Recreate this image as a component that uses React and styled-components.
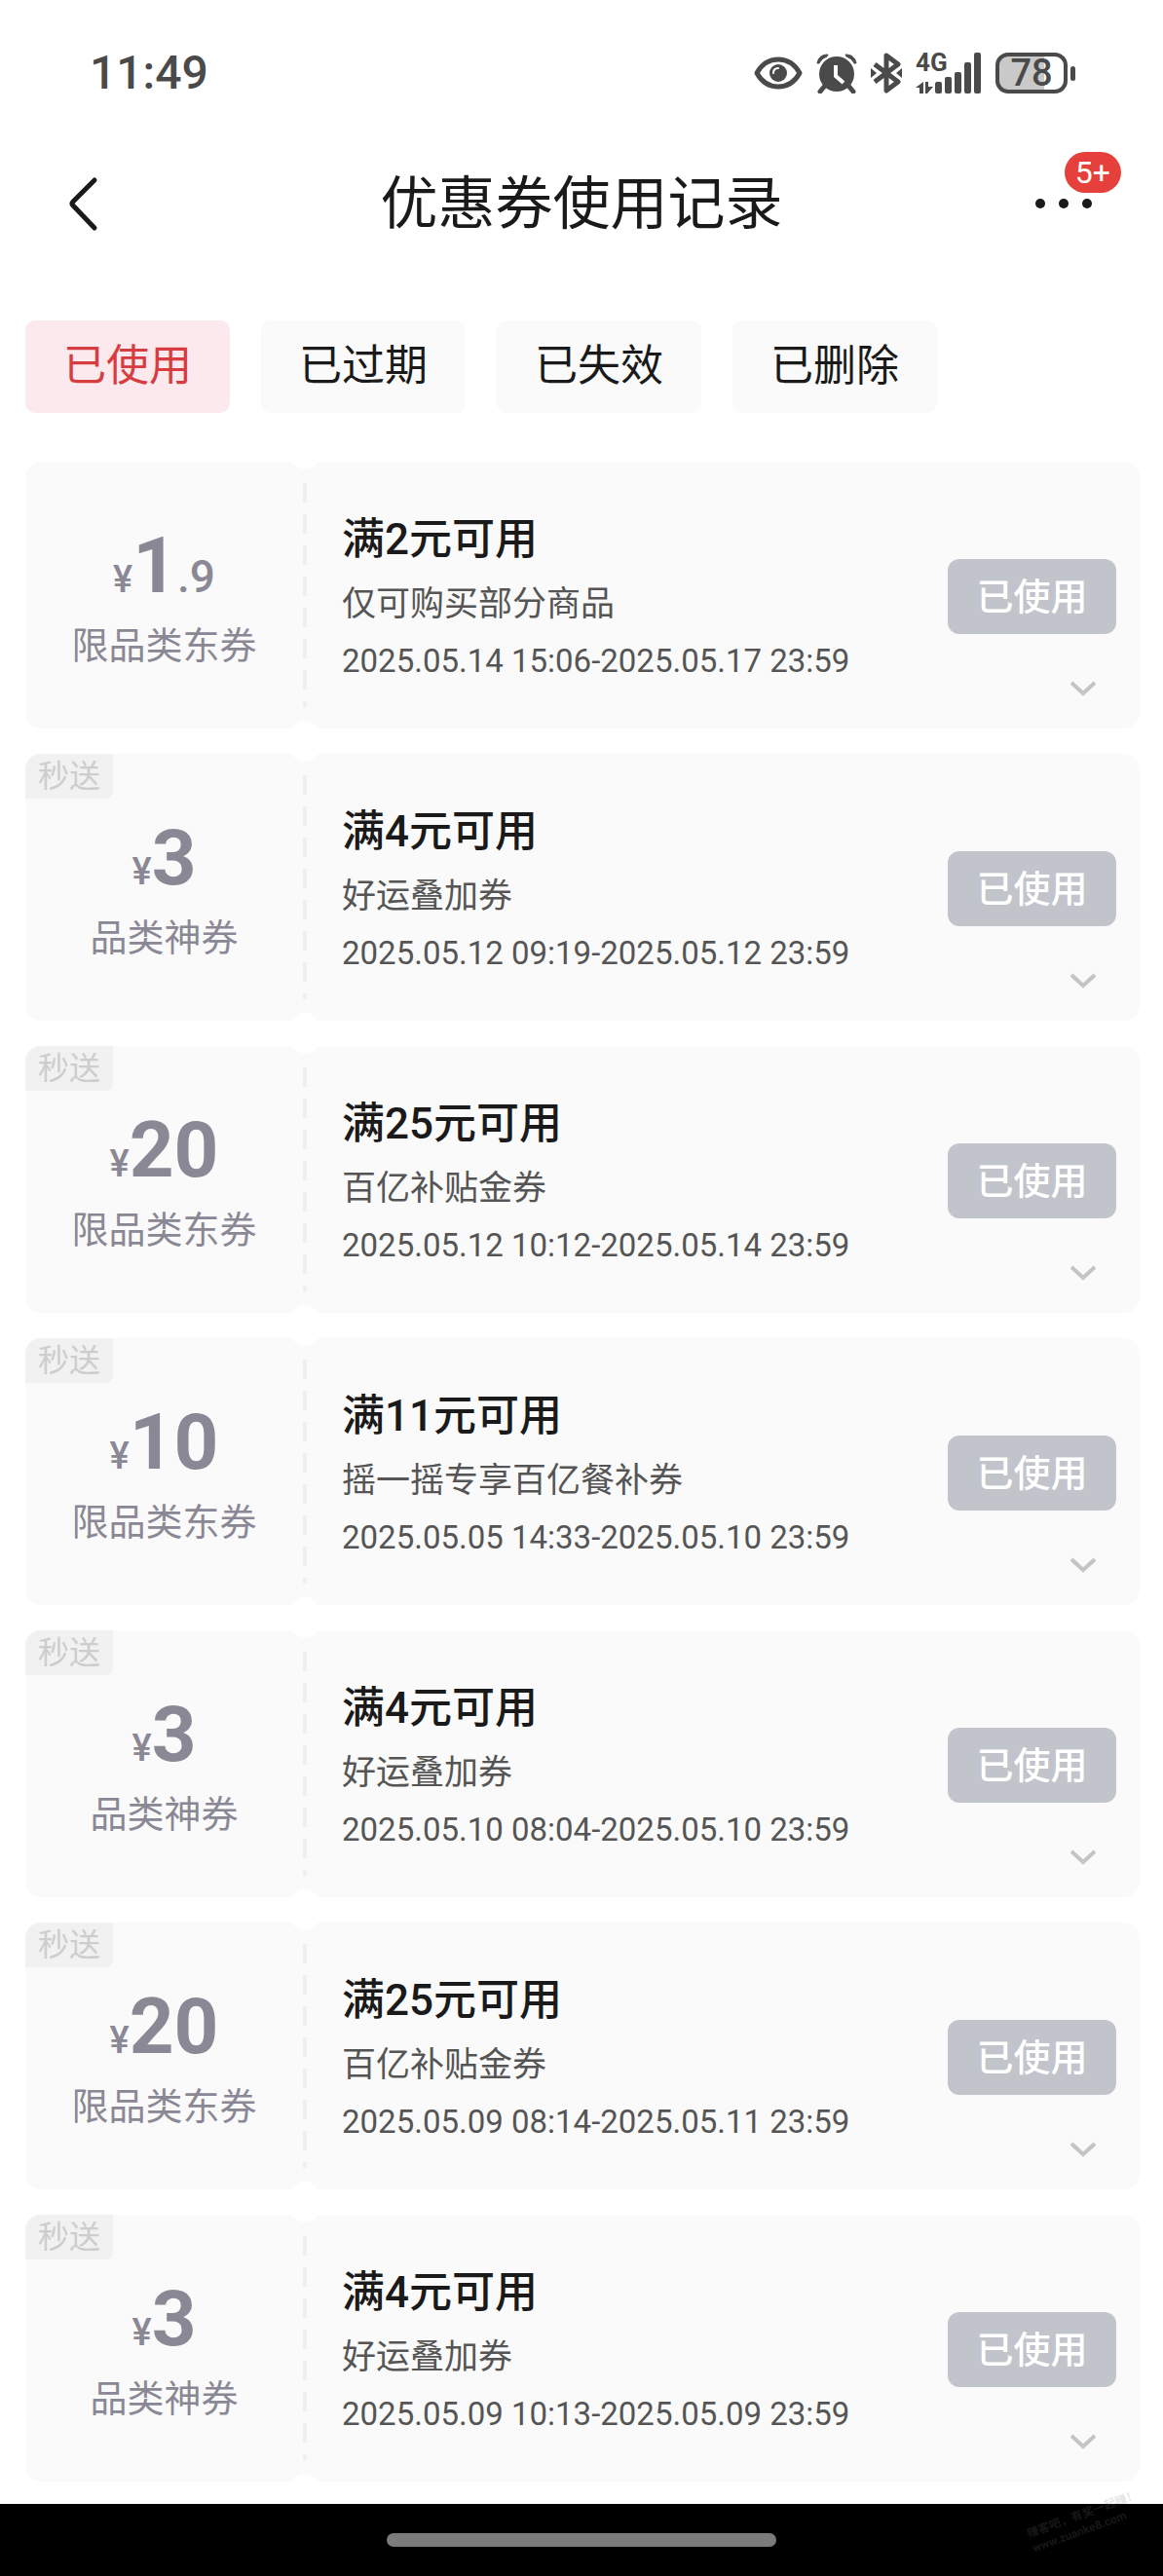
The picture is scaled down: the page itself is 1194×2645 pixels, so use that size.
import React, { useState } from "react";
import styled, { createGlobalStyle } from "styled-components";

const GlobalStyle = createGlobalStyle`
  * {
    box-sizing: border-box;
  }
  body {
    margin: 0;
    background: #fff;
    color: #1a1a1a;
    font-family: Roboto, "Noto Sans CJK SC", sans-serif;
  }
  button {
    padding: 0;
    border: 0;
    background: none;
    font-family: inherit;
    cursor: pointer;
  }
`;

const Page = styled.div`
  display: flex;
  flex-direction: column;
  min-height: 100vh;
`;

const StatusBar = styled.div`
  display: flex;
  align-items: center;
  justify-content: space-between;
  height: 150px;
  padding: 0 90px 0 92px;
  color: #4a4a4a;
`;

const Clock = styled.time`
  font-size: 48px;
  line-height: 56px;
  font-weight: 500;
`;

const StatusIcons = styled.div`
  display: flex;
  align-items: center;
  gap: 14px;
`;

const Network = styled.div`
  position: relative;
  display: flex;
  span {
    position: absolute;
    top: 0;
    left: 0;
    font-size: 26px;
    line-height: 20px;
    font-weight: 700;
  }
`;

const Battery = styled.div`
  display: flex;
  align-items: center;
  gap: 3px;
  &::after {
    width: 5px;
    height: 15px;
    border-radius: 3px;
    background: #4a4a4a;
    content: "";
  }
`;

const BatteryLevel = styled.span`
  width: 74px;
  height: 42px;
  border: 4px solid #4a4a4a;
  border-radius: 13px;
  background: linear-gradient(to right, #c9c9c9 ${({ $level }) => $level}%, #fff 0);
  font-size: 38px;
  line-height: 35px;
  font-weight: 500;
  text-align: center;
`;

const Header = styled.header`
  display: flex;
  align-items: center;
  justify-content: space-between;
  height: 120px;
  padding: 0 64px;
`;

const HeaderTitle = styled.h1`
  margin: 0;
  font-size: 59px;
  line-height: 80px;
  font-weight: 400;
`;

const IconButton = styled.button`
  position: relative;
  display: flex;
  align-items: center;
  justify-content: ${({ $end }) => ($end ? "flex-end" : "flex-start")};
  width: 80px;
  height: 80px;
`;

const Badge = styled.span`
  position: absolute;
  top: -14px;
  right: -21px;
  padding: 0 11px;
  border-radius: 21px;
  background: #e5403b;
  color: #fff;
  font-size: 32px;
  line-height: 42px;
`;

const Tabs = styled.nav`
  display: flex;
  gap: 32px;
  padding: 59px 26px 50px;
`;

const Tab = styled.button`
  width: 210px;
  height: 95px;
  padding-bottom: 2px;
  border-radius: 10px;
  background: ${({ $active }) => ($active ? "#fbe9ee" : "#fafafa")};
  color: ${({ $active }) => ($active ? "#d63c40" : "#1a1a1a")};
  font-size: 44px;
  line-height: 64px;
`;

const CouponList = styled.ul`
  display: flex;
  flex-direction: column;
  gap: 26px;
  flex: 1;
  margin: 0;
  padding: 0 24px 22px 26px;
  list-style: none;
`;

const Coupon = styled.li`
  position: relative;
  display: flex;
  min-height: 274px;
  border-radius: 16px;
  background: #fafafa;
`;

const CouponValue = styled.div`
  display: flex;
  flex-direction: column;
  align-items: center;
  width: 285px;
  padding: 63px 0 0;
  color: #8b8895;
`;

const Amount = styled.div`
  display: flex;
  align-items: baseline;
  font-size: 38px;
  line-height: 88px;
  font-weight: 500;
  strong {
    font-size: 80px;
    font-weight: 700;
  }
  small {
    font-size: 46px;
  }
`;

const Kind = styled.div`
  font-size: 38px;
  line-height: 48px;
`;

const Tag = styled.span`
  position: absolute;
  top: 0;
  left: 0;
  padding: 0 13px;
  border-radius: 16px 4px 6px 0;
  background: #f1f1f1;
  color: #cdcdcd;
  font-size: 32px;
  line-height: 46px;
`;

/* dashed tear line with a punched hole at each end */
const Tear = styled.div`
  position: relative;
  width: 4px;
  margin: 22px 0;
  background: repeating-linear-gradient(#efefef 0 20px, transparent 20px 32px);
  &::before,
  &::after {
    position: absolute;
    left: -13px;
    width: 30px;
    height: 30px;
    border-radius: 50%;
    background: #fff;
    content: "";
  }
  &::before {
    top: -44px;
  }
  &::after {
    bottom: -44px;
  }
`;

const CouponInfo = styled.div`
  flex: 1;
  min-width: 0;
  padding: 48px 0 0 36px;
`;

const CouponTitle = styled.h2`
  margin: 0;
  font-size: 44px;
  line-height: 64px;
  font-weight: 500;
`;

const CouponText = styled.p`
  margin: 0;
  color: #555;
  font-size: ${({ $date }) => ($date ? 33 : 35)}px;
  line-height: ${({ $date }) => ($date ? 46 : 70)}px;
`;

const CouponActions = styled.div`
  display: flex;
  flex-direction: column;
  align-items: flex-end;
  padding: 100px 24px 0 0;
`;

const StateButton = styled.button`
  width: 173px;
  height: 77px;
  border-radius: 12px;
  background: #c2c4cc;
  color: #fff;
  font-size: 38px;
  line-height: 56px;
  font-weight: 500;
`;

const ExpandButton = styled.button`
  display: flex;
  align-items: center;
  justify-content: center;
  width: 68px;
  height: 60px;
  margin-top: 26px;
`;

const HomeBar = styled.footer`
  position: relative;
  display: flex;
  align-items: center;
  justify-content: center;
  height: 74px;
  background: #000;
  &::before {
    width: 400px;
    height: 14px;
    border-radius: 7px;
    background: #7b7b7b;
    content: "";
  }
`;

const Watermark = styled.div`
  position: absolute;
  right: 20px;
  bottom: 40px;
  color: rgba(120, 120, 120, 0.2);
  font-size: 12px;
  line-height: 16px;
  font-weight: 700;
  transform: rotate(-20deg);
`;

const EyeIcon = () => (
  <svg width="50" height="34" viewBox="0 0 50 34" fill="none">
    <path d="M3 17C8 8 16 3 25 3s17 5 22 14c-5 9-13 14-22 14S8 26 3 17Z" stroke="#4a4a4a" strokeWidth="5" strokeLinejoin="round" />
    <circle cx="25" cy="17" r="9" fill="#4a4a4a" />
    <path d="M20 17c0-3 2-5 5-5" stroke="#fff" strokeWidth="2" strokeLinecap="round" />
  </svg>
);

const AlarmIcon = () => (
  <svg width="42" height="42" viewBox="0 0 42 42" fill="none" stroke="#4a4a4a">
    <path d="M9 34l-5 6M33 34l5 6" strokeWidth="5" strokeLinecap="round" />
    <circle cx="21" cy="22" r="18" fill="#4a4a4a" stroke="none" />
    <path d="M1 11C2 5 6 2 12 2L11 4Q5 6 3 11ZM41 11C40 5 36 2 30 2l1 2q6 2 8 7Z" fill="#4a4a4a" strokeWidth="1" strokeLinejoin="round" />
    <path d="M20 13v11l8 7" stroke="#fff" strokeWidth="4" />
  </svg>
);

const BluetoothIcon = () => (
  <svg width="32" height="42" viewBox="0 0 32 42" fill="none">
    <path d="M4 12l24 18-12 9V3l12 9L4 30" stroke="#4a4a4a" strokeWidth="5" strokeLinejoin="round" />
    <path d="M0 16l6 5-6 5zM32 16l-6 5 6 5z" fill="#4a4a4a" />
  </svg>
);

const SignalIcon = () => (
  <svg width="68" height="42" viewBox="0 0 68 42" fill="#4a4a4a">
    <path d="M8 30v12H4v-6H0zM10 30h3v5h5l-6 7h-2z" />
    <rect x="20" y="30" width="7" height="12" rx="2" />
    <rect x="30" y="25" width="7" height="17" rx="2" />
    <rect x="40" y="20" width="7" height="22" rx="2" />
    <rect x="50" y="10" width="7" height="32" rx="2" />
    <rect x="60" y="0" width="7" height="42" rx="2" />
  </svg>
);

const BackIcon = () => (
  <svg width="44" height="58" viewBox="0 0 44 58" fill="none">
    <path d="M33 4L11 26Q9 28 11 30L33 53" stroke="#1a1a1a" strokeWidth="5" strokeLinecap="round" />
  </svg>
);

const MoreIcon = () => (
  <svg width="70" height="12" viewBox="0 0 70 12" fill="#1a1a1a">
    <circle cx="8" cy="5" r="5" />
    <circle cx="32" cy="5" r="5" />
    <circle cx="56" cy="5" r="5" />
  </svg>
);

const ChevronIcon = () => (
  <svg width="28" height="16" viewBox="0 0 28 16" fill="none">
    <path d="M2 2l12 11L26 2" stroke="#c4c4c4" strokeWidth="4" />
  </svg>
);

const tabs = ["已使用", "已过期", "已失效", "已删除"];

const coupons = [
  { amount: "1", cents: ".9", kind: "限品类东券", title: "满2元可用", text: "仅可购买部分商品", date: "2025.05.14 15:06-2025.05.17 23:59" },
  { tag: "秒送", amount: "3", kind: "品类神券", title: "满4元可用", text: "好运叠加券", date: "2025.05.12 09:19-2025.05.12 23:59" },
  { tag: "秒送", amount: "20", kind: "限品类东券", title: "满25元可用", text: "百亿补贴金券", date: "2025.05.12 10:12-2025.05.14 23:59" },
  { tag: "秒送", amount: "10", kind: "限品类东券", title: "满11元可用", text: "摇一摇专享百亿餐补券", date: "2025.05.05 14:33-2025.05.10 23:59" },
  { tag: "秒送", amount: "3", kind: "品类神券", title: "满4元可用", text: "好运叠加券", date: "2025.05.10 08:04-2025.05.10 23:59" },
  { tag: "秒送", amount: "20", kind: "限品类东券", title: "满25元可用", text: "百亿补贴金券", date: "2025.05.09 08:14-2025.05.11 23:59" },
  { tag: "秒送", amount: "3", kind: "品类神券", title: "满4元可用", text: "好运叠加券", date: "2025.05.09 10:13-2025.05.09 23:59" },
];

const CouponCard = ({ tag, amount, cents, kind, title, text, date }) => (
  <Coupon>
    <CouponValue>
      <Amount>
        ¥<strong>{amount}</strong>
        {cents && <small>{cents}</small>}
      </Amount>
      <Kind>{kind}</Kind>
    </CouponValue>
    <Tear />
    <CouponInfo>
      <CouponTitle>{title}</CouponTitle>
      <CouponText>{text}</CouponText>
      <CouponText $date>{date}</CouponText>
    </CouponInfo>
    <CouponActions>
      <StateButton>已使用</StateButton>
      <ExpandButton aria-label="展开">
        <ChevronIcon />
      </ExpandButton>
    </CouponActions>
    {tag && <Tag>{tag}</Tag>}
  </Coupon>
);

const App = () => {
  const [active, setActive] = useState(tabs[0]);

  return (
    <Page>
      <GlobalStyle />
      <StatusBar>
        <Clock>11:49</Clock>
        <StatusIcons>
          <EyeIcon />
          <AlarmIcon />
          <BluetoothIcon />
          <Network>
            <SignalIcon />
            <span>4G</span>
          </Network>
          <Battery>
            <BatteryLevel $level={70}>78</BatteryLevel>
          </Battery>
        </StatusIcons>
      </StatusBar>
      <Header>
        <IconButton aria-label="返回">
          <BackIcon />
        </IconButton>
        <HeaderTitle>优惠券使用记录</HeaderTitle>
        <IconButton $end aria-label="更多">
          <MoreIcon />
          <Badge>5+</Badge>
        </IconButton>
      </Header>
      <Tabs>
        {tabs.map(tab => (
          <Tab key={tab} $active={tab === active} onClick={() => setActive(tab)}>
            {tab}
          </Tab>
        ))}
      </Tabs>
      <CouponList>
        {coupons.map(coupon => (
          <CouponCard key={coupon.date} {...coupon} />
        ))}
      </CouponList>
      <HomeBar>
        <Watermark>
          赚客吧，有奖一起赚！
          <br />
          www.zuanke8.com
        </Watermark>
      </HomeBar>
    </Page>
  );
};

export default App;
